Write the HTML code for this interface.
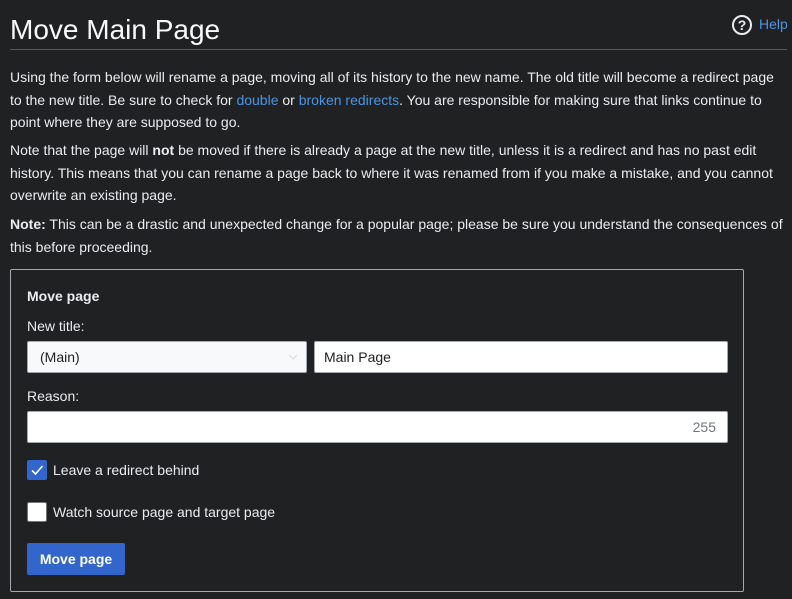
<!DOCTYPE html>
<html><head><style>
body{margin:0;background:#202122;color:#eaecf0;font-family:"Liberation Sans",sans-serif;font-size:14px;width:792px;height:599px;overflow:hidden;position:relative}
.a{position:absolute}
a{color:#4b95e5;text-decoration:none}
h1{position:absolute;left:10px;top:14px;margin:0;font-weight:normal;font-size:28px;color:#f8f9fa}
.hr{left:10px;top:49px;width:777px;height:1px;background:#54595d}
p{position:absolute;left:10px;width:778px;margin:0;line-height:22.6px}
.box{border-radius:2px}
</style></head><body>
<h1>Move Main Page</h1>
<div class="a" style="left:732px;top:15px;width:16px;height:16px;border:2px solid #eaecf0;border-radius:50%;text-align:center;font-weight:bold;font-size:14px;line-height:16px">?</div>
<a class="a" style="left:759px;top:16px;font-size:14px">Help</a>
<div class="a hr"></div>
<p style="top:66px">Using the form below will rename a page, moving all of its history to the new name. The old title will become a redirect page to the new title. Be sure to check for <a>double</a> or <a>broken redirects</a>. You are responsible for making sure that links continue to point where they are supposed to go.</p>
<p style="top:139px">Note that the page will <b>not</b> be moved if there is already a page at the new title, unless it is a redirect and has no past edit history. This means that you can rename a page back to where it was renamed from if you make a mistake, and you cannot overwrite an existing page.</p>
<p style="top:213px"><b>Note:</b> This can be a drastic and unexpected change for a popular page; please be sure you understand the consequences of this before proceeding.</p>
<div class="a" style="left:10px;top:269px;width:732px;height:321px;border:1px solid #a2a9b1;border-radius:2px"></div>
<div class="a" style="left:27px;top:288px;font-weight:bold;font-size:14px">Move page</div>
<div class="a" style="left:27px;top:318px">New title:</div>
<div class="a box" style="left:27px;top:341px;width:278px;height:30px;background:#f8f9fa;border:1px solid #a2a9b1;color:#202122;line-height:30px;text-indent:12px">(Main)<svg style="position:absolute;right:8px;top:12px" width="10" height="7"><path d="M1 1l4 4 4-4" stroke="#dcdfe3" stroke-width="1.3" fill="none"/></svg></div>
<div class="a box" style="left:314px;top:341px;width:412px;height:30px;background:#fff;border:1px solid #a2a9b1;color:#202122;line-height:30px;text-indent:9px">Main Page</div>
<div class="a" style="left:27px;top:388px">Reason:</div>
<div class="a box" style="left:27px;top:411px;width:699px;height:30px;background:#fff;border:1px solid #a2a9b1;color:#72777d;line-height:30px;text-align:right"><span style="padding-right:11px">255</span></div>
<div class="a box" style="left:27px;top:460px;width:20px;height:20px;background:#3366cc"><svg width="20" height="20"><path d="M5 10.5l3.5 3.5 7-8" stroke="#fff" stroke-width="1.6" fill="none"/></svg></div>
<div class="a" style="left:53px;top:462px">Leave a redirect behind</div>
<div class="a box" style="left:27px;top:502px;width:18px;height:18px;background:#fff;border:1px solid #72777d"></div>
<div class="a" style="left:53px;top:504px">Watch source page and target page</div>
<div class="a box" style="left:27px;top:543px;width:98px;height:32px;background:#3366cc;color:#fff;font-weight:bold;text-align:center;line-height:32px">Move page</div>
</body></html>
